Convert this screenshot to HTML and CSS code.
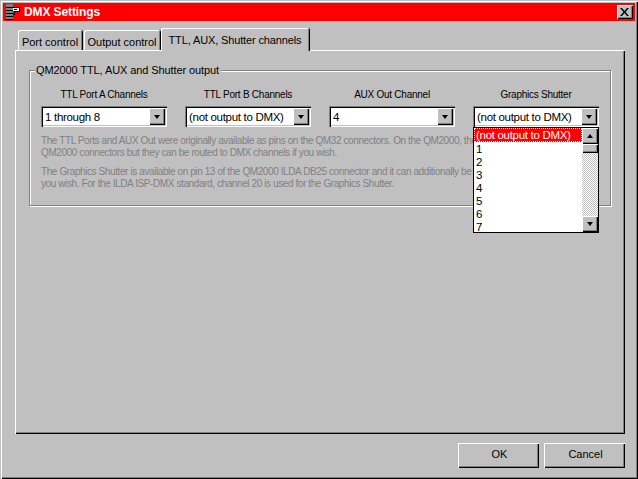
FILE: index.html
```html
<!DOCTYPE html>
<html lang="en">
<head>
<meta charset="utf-8">
<title>DMX Settings</title>
<link rel="stylesheet" href="styles.css">
</head>
<body>
<div class="window">
  <div class="titlebar">
    <svg class="app-icon" width="16" height="16" viewBox="0 0 16 16" shape-rendering="crispEdges">
      <rect x="1" y="0" width="7" height="16" fill="#808080"/>
      <path d="M1 3.500h7M1 6.500h7M1 9.500h7M1 12.500h7M1 15.500h7" stroke="#000" stroke-width="1"/>
      <path d="M8 4h6v3H8z" fill="#fff"/>
      <path d="M7.500 3.500h7v4h-5v3h-2M9 5.500h3" stroke="#000" stroke-width="1" fill="none"/>
    </svg>
    <span class="title-text">DMX Settings</span>
    <button class="close-btn" aria-label="Close">
      <svg width="9" height="8" viewBox="0 0 9 8"><path d="M0 0h2l2.500 3L7 0h2L5.500 4 9 8H7L4.500 5 2 8H0l3.500-4z" fill="#000"/></svg>
    </button>
  </div>

  <div class="tabs">
    <div class="tab tab-first">Port control</div>
    <div class="tab tab-second">Output control</div>
    <div class="tab tab-active">TTL, AUX, Shutter channels</div>
  </div>

  <div class="pane">
    <div class="group">
      <div class="legend">QM2000 TTL, AUX and Shutter output</div>
      <div class="fields">
        <div class="field">
          <div class="field-label">TTL Port A Channels</div>
          <div class="combo"><span class="combo-value">1 through 8</span><span class="arrow-btn"><i class="arrow"></i></span></div>
        </div>
        <div class="field">
          <div class="field-label">TTL Port B Channels</div>
          <div class="combo"><span class="combo-value">(not output to DMX)</span><span class="arrow-btn"><i class="arrow"></i></span></div>
        </div>
        <div class="field">
          <div class="field-label">AUX Out Channel</div>
          <div class="combo"><span class="combo-value">4</span><span class="arrow-btn"><i class="arrow"></i></span></div>
        </div>
        <div class="field field-open">
          <div class="field-label">Graphics Shutter</div>
          <div class="combo"><span class="combo-value">(not output to DMX)</span><span class="arrow-btn"><i class="arrow"></i></span></div>
          <div class="dropdown">
            <ul class="options">
              <li class="option option-selected">(not output to DMX)</li>
              <li class="option">1</li>
              <li class="option">2</li>
              <li class="option">3</li>
              <li class="option">4</li>
              <li class="option">5</li>
              <li class="option">6</li>
              <li class="option">7</li>
            </ul>
            <div class="scrollbar">
              <span class="scroll-btn"><i class="arrow arrow-up"></i></span>
              <span class="scroll-thumb"></span>
              <span class="scroll-track"></span>
              <span class="scroll-btn"><i class="arrow"></i></span>
            </div>
          </div>
        </div>
      </div>
      <p class="note">The TTL Ports and AUX Out were originally available as pins on the QM32 connectors. On the QM2000, these are not on the<br>QM2000 connectors but they can be routed to DMX channels if you wish.</p>
      <p class="note">The Graphics Shutter is available on pin 13 of the QM2000 ILDA DB25 connector and it can additionally be routed to DMX if<br>you wish. For the ILDA ISP-DMX standard, channel 20 is used for the Graphics Shutter.</p>
    </div>
  </div>

  <div class="footer">
    <button class="btn">OK</button>
    <button class="btn">Cancel</button>
  </div>
</div>
</body>
</html>
```
FILE: styles.css
```css
* { box-sizing: border-box; }
html, body { margin: 0; padding: 0; }
body {
  width: 638px;
  height: 479px;
  overflow: hidden;
  background: #c0c0c0;
  font-family: "Liberation Sans", Arial, sans-serif;
  font-size: 11px;
  color: #000;
}
.window {
  width: 638px;
  height: 479px;
  padding: 3px 3px 0;
  background: #c0c0c0;
  box-shadow: inset 1px 1px 0 #c0c0c0, inset 2px 2px 0 #fff, inset -1px -1px 0 #000, inset -2px -2px 0 #808080;
}
.titlebar {
  height: 18px;
  background: #f00;
  display: flex;
  align-items: center;
  padding: 0 2px;
}
.app-icon { flex: none; }
.title-text {
  margin-left: 3px;
  color: #fff;
  font-weight: 700;
  font-size: 12px;
  letter-spacing: -0.1px;
}
.close-btn {
  margin-left: auto;
  width: 16px;
  height: 14px;
  padding: 0;
  border: 0;
  background: #c0c0c0;
  display: flex;
  align-items: center;
  justify-content: center;
  box-shadow: inset 1px 1px 0 #fff, inset -1px -1px 0 #000, inset -2px -2px 0 #808080;
}
.close-btn svg { display: block; margin: -1px 0 0 -1px; }
.tabs {
  display: flex;
  align-items: flex-end;
  height: 29px;
  margin-left: 15px;
  position: relative;
  z-index: 1;
}
.tab {
  height: 20px;
  padding: 4px 0 0;
  margin-right: 2px;
  font-size: 11px;
  line-height: 16px;
  text-align: center;
  white-space: nowrap;
  background: #c0c0c0;
  border-radius: 2px 2px 0 0;
  box-shadow: inset 1px 1px 0 #fff, inset -1px 0 0 #808080, 1px 0 0 #000;
}
.tab-first { width: 64px; }
.tab-second { width: 76px; margin-right: 1px; }
.tab-active {
  width: 148px;
  height: 23px;
  margin-right: 0;
  padding: 4px 0 0;
  margin-bottom: -1px;
  letter-spacing: -0.13px;
}
.pane {
  width: 610px;
  height: 384px;
  margin-left: 12px;
  padding: 20px 0 0 14px;
  background: #c0c0c0;
  box-shadow: inset 1px 1px 0 #fff, inset -1px -1px 0 #000, inset -2px -2px 0 #808080;
}
.group {
  position: relative;
  width: 582px;
  height: 136px;
  padding: 16px 11px 0;
  border: 1px solid #808080;
  box-shadow: inset 1px 1px 0 #fff, 1px 1px 0 #fff;
}
.legend {
  position: absolute;
  left: 5px;
  top: -7px;
  padding: 0 2px 0 1px;
  line-height: 13px;
  background: #c0c0c0;
  font-size: 11px;
  letter-spacing: -0.1px;
  white-space: nowrap;
}
.fields {
  display: grid;
  grid-template-columns: repeat(4, 126px);
  column-gap: 18px;
}
.field { position: relative; }
.field-label {
  height: 19px;
  padding-top: 1px;
  line-height: 13px;
  text-align: center;
  font-size: 10px;
  letter-spacing: -0.25px;
}
.combo {
  height: 21px;
  display: flex;
  align-items: center;
  justify-content: space-between;
  background: #fff;
  padding-left: 4px;
  padding-right: 2px;
  font-size: 11.5px;
  letter-spacing: -0.3px;
  box-shadow: inset 1px 1px 0 #808080, inset 2px 2px 0 #000, inset -1px -1px 0 #fff, inset -2px -2px 0 #c0c0c0;
}
.combo-value { line-height: 15px; padding-top: 1px; white-space: nowrap; }
.arrow-btn {
  width: 16px;
  height: 17px;
  flex: none;
  display: flex;
  align-items: center;
  justify-content: center;
  background: #c0c0c0;
  box-shadow: inset 1px 1px 0 #fff, inset -1px -1px 0 #000, inset -2px -2px 0 #808080;
}
.arrow {
  display: block;
  width: 0;
  height: 0;
  border-left: 3.5px solid transparent;
  border-right: 3.5px solid transparent;
  border-top: 4px solid #000;
}
.arrow-up {
  border-top: 0;
  border-bottom: 4px solid #000;
}
.dropdown {
  position: absolute;
  left: 0;
  top: 40px;
  width: 126px;
  height: 106px;
  background: #fff;
  border: 1px solid #000;
  display: flex;
  z-index: 2;
}
.options {
  list-style: none;
  margin: 0;
  padding: 0;
  flex: 1;
  min-width: 0;
}
.option {
  height: 13px;
  padding-left: 2px;
  font-size: 11.5px;
  letter-spacing: -0.3px;
  line-height: 15px;
  white-space: nowrap;
}
.option-selected {
  background: #f00;
  color: #fff;
  line-height: 14px;
  height: 14px;
  outline: 1px dotted #fff;
  outline-offset: -1px;
}
.scrollbar {
  width: 16px;
  flex: none;
  display: flex;
  flex-direction: column;
}
.scroll-btn {
  height: 16px;
  flex: none;
  display: flex;
  align-items: center;
  justify-content: center;
  background: #c0c0c0;
  box-shadow: inset 1px 1px 0 #fff, inset -1px -1px 0 #000, inset -2px -2px 0 #808080;
}
.scroll-thumb {
  height: 9px;
  flex: none;
  background: #c0c0c0;
  box-shadow: inset 1px 1px 0 #fff, inset -1px -1px 0 #000, inset -2px -2px 0 #808080;
}
.scroll-track {
  flex: 1;
  background-color: #fff;
  background-image: conic-gradient(#c0c0c0 25%, #fff 0 50%, #c0c0c0 0 75%, #fff 0);
  background-size: 2px 2px;
}
.note {
  margin: 7px 0 0;
  color: #808080;
  font-size: 10px;
  letter-spacing: -0.4px;
  line-height: 12px;
  white-space: nowrap;
}
.fields + .note { margin-top: 8px; }
.footer {
  display: flex;
  justify-content: flex-end;
  gap: 5px;
  width: 622px;
  margin-top: 9px;
}
.btn {
  width: 81px;
  height: 25px;
  padding: 0 0 3px 2px;
  border: 0;
  background: #c0c0c0;
  font-family: inherit;
  font-size: 11px;
  color: #000;
  box-shadow: inset 1px 1px 0 #fff, inset -1px -1px 0 #000, inset -2px -2px 0 #808080;
}
```
